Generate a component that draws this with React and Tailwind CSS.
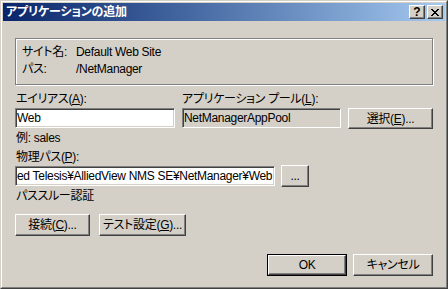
import React from 'react';

/* ─── Classic Windows pieces ─────────────────────────────────────────── */
const raised =
  'border border-white border-r-[#404040] border-b-[#404040] shadow-[inset_-1px_-1px_0_#808080] bg-[#d4d0c8]';
const sunken =
  'border border-[#808080] border-r-white border-b-white shadow-[inset_1px_1px_0_#404040,inset_-1px_-1px_0_#d4d0c8]';

const Key = ({ children }) => <span className="underline underline-offset-1">{children}</span>;

const Button = ({ className = '', children }) => (
  <div className={`${raised} flex items-center justify-center leading-[16px] ${className}`}>
    {children}
  </div>
);

const Field = ({ className = '', bg = 'bg-white', children }) => (
  <div
    className={`${sunken} ${bg} flex items-center pl-[1px] leading-[16px] overflow-hidden whitespace-nowrap ${className}`}
  >
    {children}
  </div>
);

const TitleButton = ({ children }) => (
  <div className={`${raised} w-[16px] h-[14px] flex items-center justify-center`}>{children}</div>
);

/* ─── Dialog ─────────────────────────────────────────────────────────── */
export default function App() {
  return (
    <div
      className="w-[448px] h-[289px] border border-[#d4d0c8] border-r-[#404040] border-b-[#404040] text-[12px] text-black tracking-[-0.3px] font-['Liberation_Sans','Noto_Sans_CJK_JP',sans-serif] [font-feature-settings:'palt']"
    >
      <div className="h-full border border-white border-r-[#808080] border-b-[#808080] bg-[#d4d0c8] p-[1px] flex flex-col">
        {/* title bar */}
        <div className="h-[18px] shrink-0 flex items-center justify-between pl-[3px] pr-[2px] bg-gradient-to-r from-[#0a246a] to-[#a6caf0]">
          <span className="text-white font-bold leading-[16px] tracking-[-0.2px]">アプリケーションの追加</span>
          <div className="flex gap-[2px]">
            <TitleButton>
              <span className="font-bold text-[12px] leading-none tracking-normal">?</span>
            </TitleButton>
            <TitleButton>
              <svg width="8" height="7" viewBox="0 0 8 7" shapeRendering="crispEdges">
                <path d="M0 0h2v1H0zM6 0h2v1H6zM1 1h2v1H1zM5 1h2v1H5zM2 2h4v1H2zM3 3h2v1H3zM2 4h4v1H2zM1 5h2v1H1zM5 5h2v1H5zM0 6h2v1H0zM6 6h2v1H6z" fill="#000" />
              </svg>
            </TitleButton>
          </div>
        </div>

        <div className="flex flex-col px-[12px]">
          {/* site info */}
          <div className="mt-[17px] h-[47px] border border-[#808080] shadow-[inset_1px_1px_0_#fff,1px_1px_0_#fff] pl-[6px] pt-[5px] flex flex-col gap-[1px]">
            <div className="flex h-[16px] leading-[16px]">
              <span className="w-[54px]">サイト名:</span>
              <span>Default Web Site</span>
            </div>
            <div className="flex h-[16px] leading-[16px]">
              <span className="w-[54px]">パス:</span>
              <span>/NetManager</span>
            </div>
          </div>

          {/* alias / pool */}
          <div className="mt-[6px] grid grid-cols-[160px_159px_85px] gap-x-[7px]">
            <div className="pl-[1px] h-[16px] leading-[16px] mb-[1px]">
              エイリアス(<Key>A</Key>):
            </div>
            <div className="h-[16px] leading-[16px]">
              アプリケーション プール(<Key>L</Key>):
            </div>
            <div />
            <Field className="h-[20px]">Web</Field>
            <Field className="h-[20px]" bg="bg-[#d4d0c8]">
              NetManagerAppPool
            </Field>
            <Button className="h-[21px]">
              選択(<Key>E</Key>)...
            </Button>
          </div>

          <div className="pl-[1px] h-[16px] leading-[16px] mt-[1px]">例: sales</div>

          {/* physical path */}
          <div className="pl-[1px] h-[16px] leading-[16px] mt-[3px]">
            物理パス(<Key>P</Key>):
          </div>
          <div className="flex items-center gap-[6px] h-[22px]">
            <Field className="w-[260px] h-[20px]">ed Telesis¥AlliedView NMS SE¥NetManager¥Web</Field>
            <Button className="w-[28px] h-[22px]">...</Button>
          </div>

          <div className="pl-[1px] h-[16px] leading-[16px] mt-[1px]">パススルー認証</div>

          <div className="mt-[10px] flex gap-[9px]">
            <Button className="w-[75px] h-[22px]">
              接続(<Key>C</Key>)...
            </Button>
            <Button className="w-[87px] h-[22px]">
              テスト設定(<Key>G</Key>)...
            </Button>
          </div>

          {/* OK / cancel */}
          <div className="mt-[18px] flex justify-end gap-[6px]">
            <div className="w-[80px] h-[22px] border border-black flex">
              <Button className="flex-1">OK</Button>
            </div>
            <Button className="w-[80px] h-[22px]">キャンセル</Button>
          </div>
        </div>
      </div>
    </div>
  );
}
